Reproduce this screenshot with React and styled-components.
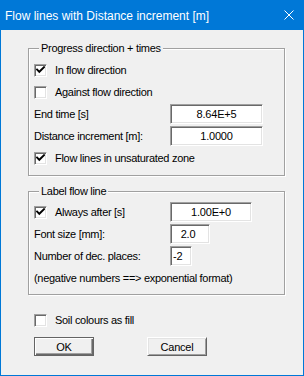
import React from "react";
import styled, { createGlobalStyle } from "styled-components";

const Global = createGlobalStyle`
  html, body { margin: 0; padding: 0; background: #f0f0f0; }
  body {
    width: 304px; height: 376px; overflow: hidden;
    font-family: "Liberation Sans", Arial, sans-serif;
  }
`;

const Window = styled.div`
  width: 304px;
  height: 376px;
  box-sizing: border-box;
  border: 1px solid #0078d7;
  border-top: none;
  background: #f0f0f0;
  display: flex;
  flex-direction: column;
`;

const TitleBar = styled.div`
  height: 30px;
  flex: none;
  background: #0078d7;
  color: #fff;
  display: flex;
  align-items: center;
  justify-content: space-between;
  padding: 0 9px 0 4px;
  font-size: 12px;
  font-family: "Liberation Sans", Arial, sans-serif;
`;

const Title = styled.span`
  line-height: 14px;
  padding-top: 1px;
`;

const Body = styled.div`
  display: flex;
  flex-direction: column;
  padding: 18px 0 0 27px;
`;

const Group = styled.div`
  position: relative;
  width: 257px;
  box-sizing: border-box;
  border: 1px solid #a0a0a0;
  box-shadow: inset 1px 1px 0 #fff, 1px 1px 0 #fff;
  padding: ${(p) => p.$pt}px 0 ${(p) => p.$pb}px 5px;
  margin-top: ${(p) => p.$mt || 0}px;
  display: flex;
  flex-direction: column;
`;

const Legend = styled.span`
  position: absolute;
  top: -7px;
  left: 10px;
  padding: 0 2px;
  background: #f0f0f0;
  font-size: 11px;
  line-height: 13px;
  letter-spacing: -0.3px;
  color: #000;
`;

const Row = styled.div`
  height: 22px;
  display: flex;
  align-items: center;
  margin-left: ${(p) => p.$ml || 0}px;
  margin-top: ${(p) => p.$mt || 0}px;
`;

const Label = styled.span`
  font-size: 11px;
  line-height: 13px;
  letter-spacing: -0.3px;
  color: #000;
  white-space: nowrap;
  width: ${(p) => (p.$w ? `${p.$w}px` : "auto")};
  flex: none;
  margin-left: ${(p) => p.$ml || 0}px;
`;

const Box = styled.span`
  width: 13px;
  height: 13px;
  box-sizing: border-box;
  flex: none;
  background: #fff;
  border-top: 1px solid #a0a0a0;
  border-left: 1px solid #a0a0a0;
  border-bottom: 1px solid #fff;
  border-right: 1px solid #fff;
  box-shadow: inset 1px 1px 0 #696969, inset -1px -1px 0 #e3e3e3;
  display: flex;
  align-items: center;
  justify-content: center;
`;

const Field = styled.div`
  width: ${(p) => p.$w}px;
  height: 20px;
  box-sizing: border-box;
  background: #fff;
  border-top: 1px solid #a0a0a0;
  border-left: 1px solid #a0a0a0;
  border-bottom: 1px solid #fff;
  border-right: 1px solid #fff;
  box-shadow: inset 1px 1px 0 #696969, inset -1px -1px 0 #e3e3e3;
  font-size: 11px;
  letter-spacing: -0.2px;
  line-height: 18px;
  color: #000;
  text-align: ${(p) => p.$align || "center"};
  padding: 0 ${(p) => p.$pr || 0}px 0 ${(p) => p.$pl || 0}px;
  flex: none;
`;

const Buttons = styled.div`
  display: flex;
  margin: 6px 0 0 6px;
`;

const Button = styled.button`
  width: 60px;
  height: 19px;
  box-sizing: border-box;
  margin: 0 ${(p) => p.$mr || 0}px 0 0;
  padding: 0;
  background: #f0f0f0;
  font-family: "Liberation Sans", Arial, sans-serif;
  font-size: 11px;
  letter-spacing: -0.2px;
  color: #000;
  border: 1px solid ${(p) => (p.$default ? "#646464" : "#fff")};
  border-right-color: #646464;
  border-bottom-color: #646464;
  box-shadow: ${(p) =>
    p.$default
      ? "inset 1px 1px 0 #fff, inset -1px -1px 0 #696969, inset -2px -2px 0 #a0a0a0"
      : "inset 1px 1px 0 #e3e3e3, inset -1px -1px 0 #a0a0a0"};
  cursor: default;
`;

const Check = () => (
  <svg width="9" height="9" viewBox="0 0 9 9">
    <path d="M1 3.5 L3.3 5.8 L8 1.2" fill="none" stroke="#000" strokeWidth="1.9" strokeLinecap="square" />
  </svg>
);

const CheckBox = ({ checked }) => <Box>{checked ? <Check /> : null}</Box>;

export default function App() {
  return (
    <>
      <Global />
      <Window>
        <TitleBar>
          <Title>Flow lines with Distance increment [m]</Title>
          <svg width="10" height="10" viewBox="0 0 10 10">
            <path d="M0.5 0.5 L9.5 9.5 M9.5 0.5 L0.5 9.5" stroke="#fff" strokeWidth="1" />
          </svg>
        </TitleBar>
        <Body>
          <Group $pt={10} $pb={6}>
            <Legend>Progress direction + times</Legend>
            <Row>
              <CheckBox checked />
              <Label $ml={8}>In flow direction</Label>
            </Row>
            <Row>
              <CheckBox />
              <Label $ml={8}>Against flow direction</Label>
            </Row>
            <Row>
              <Label $w={136}>End time [s]</Label>
              <Field $w={93}>8.64E+5</Field>
            </Row>
            <Row>
              <Label $w={136}>Distance increment [m]:</Label>
              <Field $w={93}>1.0000</Field>
            </Row>
            <Row>
              <CheckBox checked />
              <Label $ml={8}>Flow lines in unsaturated zone</Label>
            </Row>
          </Group>
          <Group $pt={9} $pb={5} $mt={15}>
            <Legend>Label flow line</Legend>
            <Row>
              <CheckBox checked />
              <Label $ml={8} $w={115}>Always after [s]</Label>
              <Field $w={82}>1.00E+0</Field>
            </Row>
            <Row>
              <Label $w={136}>Font size [mm]:</Label>
              <Field $w={40} $pr={4}>2.0</Field>
            </Row>
            <Row>
              <Label $w={136}>Number of dec. places:</Label>
              <Field $w={22} $align="left" $pl={2}>-2</Field>
            </Row>
            <Row>
              <Label>(negative numbers ==&gt; exponential format)</Label>
            </Row>
          </Group>
          <Row $ml={6} $mt={14}>
            <CheckBox />
            <Label $ml={8}>Soil colours as fill</Label>
          </Row>
          <Buttons>
            <Button $default $mr={53}>OK</Button>
            <Button>Cancel</Button>
          </Buttons>
        </Body>
      </Window>
    </>
  );
}
